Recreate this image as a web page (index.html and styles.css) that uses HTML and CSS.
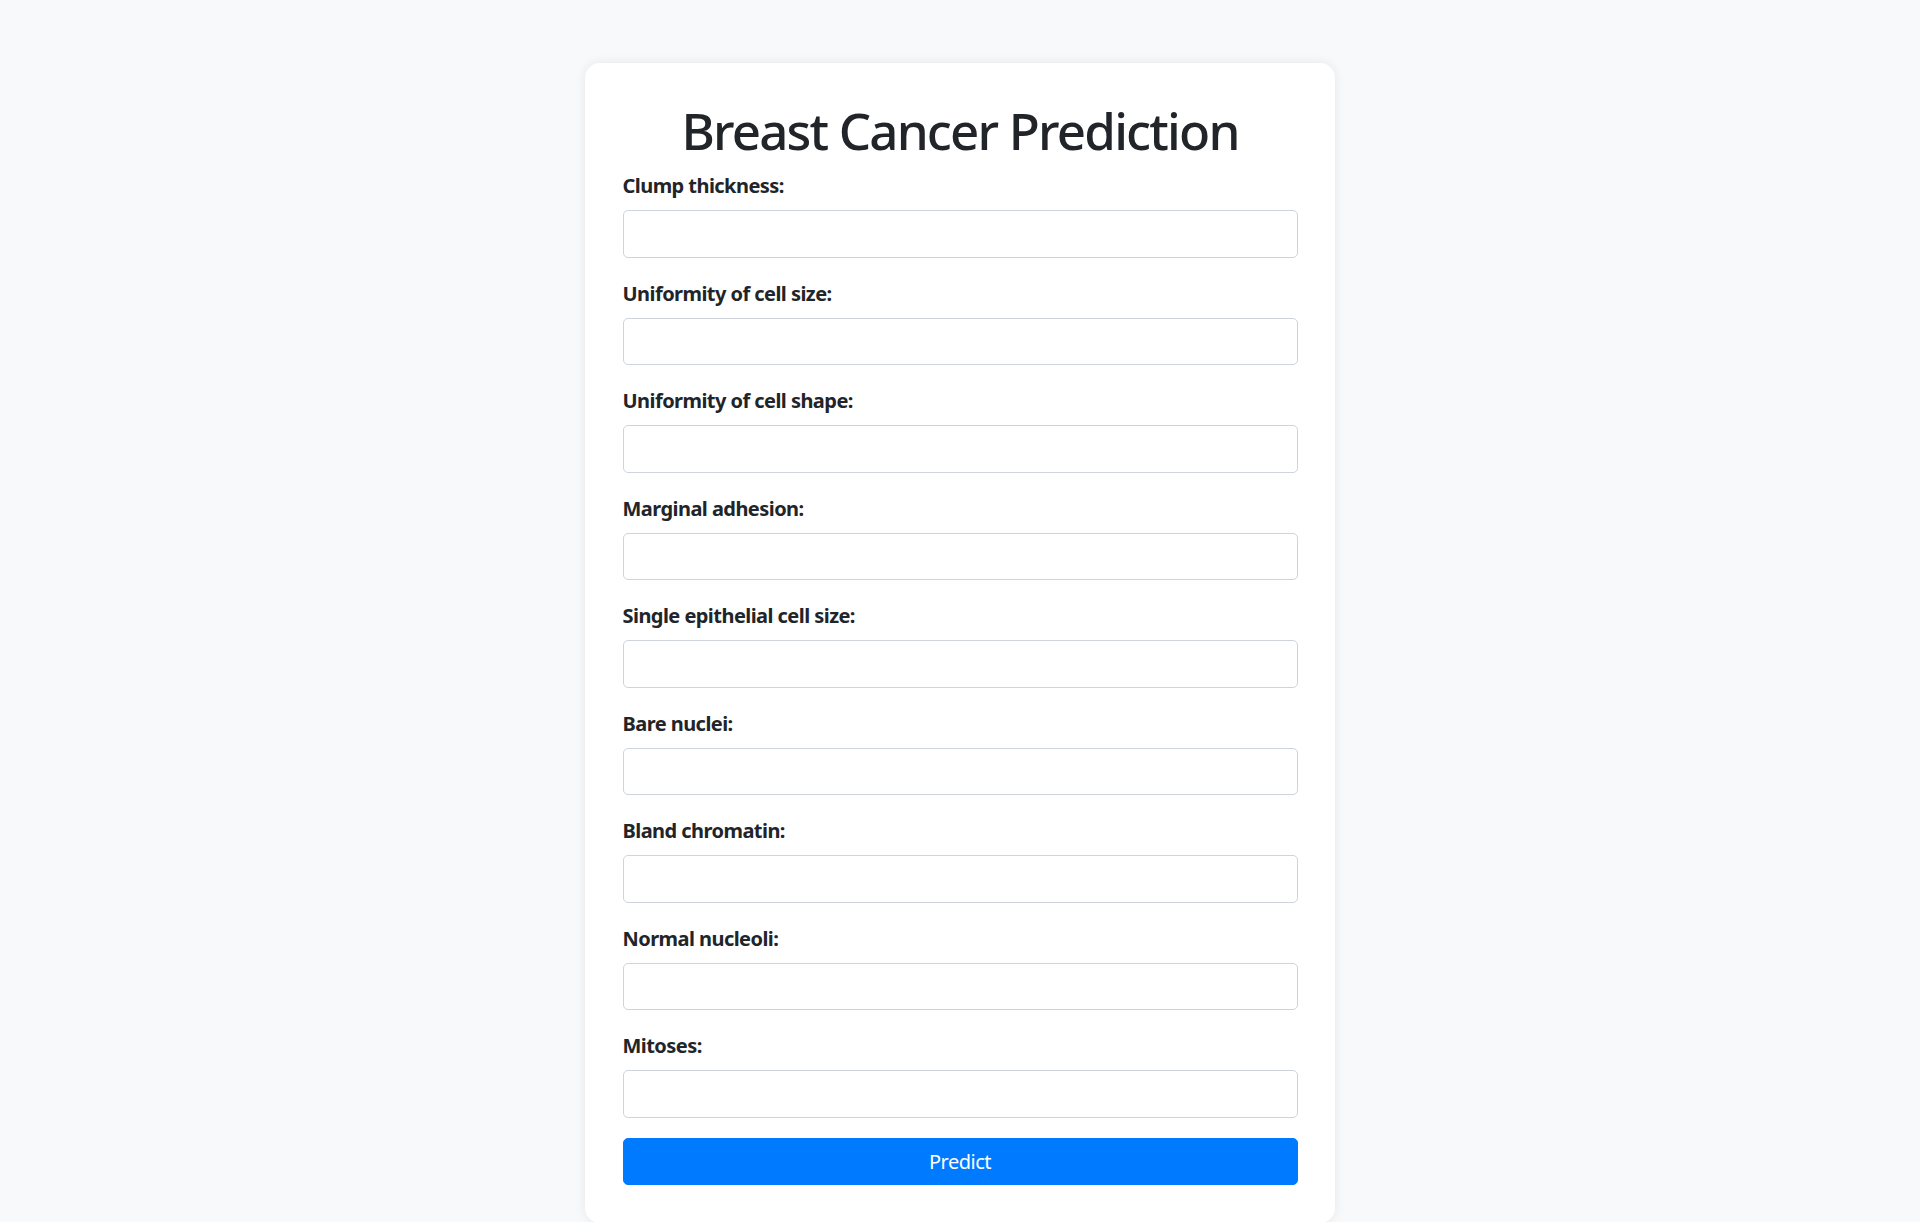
FILE: index.html
```html
<!DOCTYPE html>
<html lang="en">
<head>
<meta charset="utf-8">
<title>Breast Cancer Prediction</title>
<link rel="stylesheet" href="styles.css">
</head>
<body>
<div class="container">
  <div class="card">
    <h1 class="title">Breast Cancer Prediction</h1>
    <form class="form">
      <div class="group"><label class="label">Clump thickness:</label><input class="input" type="text"></div>
      <div class="group"><label class="label">Uniformity of cell size:</label><input class="input" type="text"></div>
      <div class="group"><label class="label">Uniformity of cell shape:</label><input class="input" type="text"></div>
      <div class="group"><label class="label">Marginal adhesion:</label><input class="input" type="text"></div>
      <div class="group"><label class="label">Single epithelial cell size:</label><input class="input" type="text"></div>
      <div class="group"><label class="label">Bare nuclei:</label><input class="input" type="text"></div>
      <div class="group"><label class="label">Bland chromatin:</label><input class="input" type="text"></div>
      <div class="group"><label class="label">Normal nucleoli:</label><input class="input" type="text"></div>
      <div class="group"><label class="label">Mitoses:</label><input class="input" type="text"></div>
      <button class="btn" type="button">Predict</button>
    </form>
  </div>
</div>
</body>
</html>
```
FILE: styles.css
```css
* { box-sizing: border-box; }
html, body { margin: 0; padding: 0; }
body {
  background: #f8f9fa;
  font-family: "Noto Sans", "Open Sans", sans-serif;
  font-size: 20px;
  line-height: 1.5;
  color: #212529;
}
.container {
  display: flex;
  justify-content: center;
  padding-top: 62.5px;
}
.card {
  width: 750px;
  background: #fff;
  border-radius: 15px;
  padding: 37.5px;
  box-shadow: 0 0 12px rgba(0, 0, 0, 0.08);
}
.title {
  margin: 0 0 10px;
  font-size: 51px;
  font-weight: 500;
  line-height: 60px;
  letter-spacing: -1.8px;
  text-align: center;
}
.form { display: flex; flex-direction: column; }
.group { display: flex; flex-direction: column; margin-bottom: 20px; }
.label {
  font-weight: 700;
  margin-bottom: 10px;
  line-height: 30px;
  padding-top: 1px;
  height: 30px;
  letter-spacing: -0.55px;
}
.input {
  height: 47.5px;
  width: 100%;
  border: 1px solid #ced4da;
  border-radius: 5px;
  background: #fff;
  font: inherit;
  padding: 7.5px 15px;
}
.btn {
  height: 47.5px;
  width: 100%;
  border: 1px solid #007bff;
  border-radius: 5px;
  background: #007bff;
  color: #fff;
  font: inherit;
  line-height: 1.5;
  letter-spacing: -0.5px;
  padding: 8px 15px 7px;
}
```
